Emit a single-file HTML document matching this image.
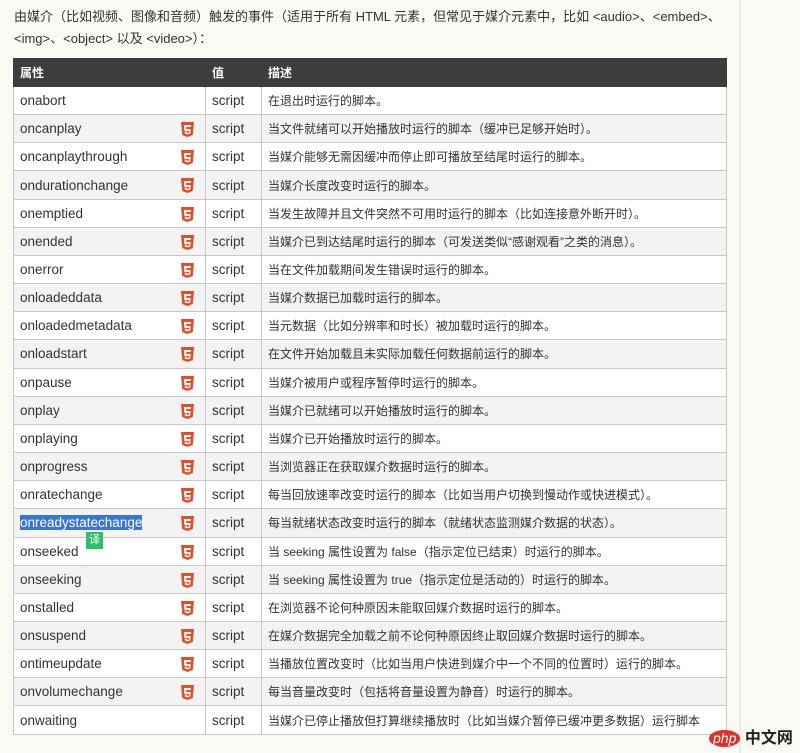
<!DOCTYPE html>
<html><head><meta charset="utf-8"><style>
body{margin:0;width:800px;height:753px;background:#fafaf5;font-family:"Liberation Sans","Noto Sans CJK SC",sans-serif;color:#333;font-size:13px;position:relative;overflow:hidden}
.vl{position:absolute;left:739px;top:0;width:2px;height:753px;background:#ebebe3}
.p{position:absolute;left:14px;top:6px;line-height:22px;font-size:13px;color:#333}
table{position:absolute;left:13px;top:58px;width:714px;border-collapse:collapse;table-layout:fixed}
th{background:#3d3d3d;color:#fff;text-align:left;font-weight:bold;height:27px;padding:0 6px;font-size:12px;border:1px solid #3d3d3d}
td{height:27.17px;padding:0 6px;border:1px solid #c8c8c8;white-space:nowrap;overflow:hidden;font-size:13.5px;position:relative;vertical-align:middle}
tr:nth-child(even) td{background:#fff}
tr:nth-child(odd) td{background:#f3f3f3}
td:nth-child(3){font-size:12px}
.h5{position:absolute;right:11px;top:7px}
.sel{background:#3875d7;color:#fff}
.yi{position:absolute;left:86px;top:532px;width:17px;height:17px;background:#2fbf6a;color:#fff;font-size:11px;text-align:center;line-height:17px}
.logo{position:absolute;left:709px;top:724px;font-size:16px}
</style></head><body>
<div class="vl"></div>
<div class="p">由媒介（比如视频、图像和音频）触发的事件（适用于所有 HTML 元素，但常见于媒介元素中，比如 &lt;audio&gt;、&lt;embed&gt;、<br>&lt;img&gt;、&lt;object&gt; 以及 &lt;video&gt;）：</div>
<table>
<colgroup><col style="width:192px"><col style="width:56px"><col></colgroup>
<tr><th>属性</th><th>值</th><th>描述</th></tr>
<tr><td>onabort</td><td>script</td><td>在退出时运行的脚本。</td></tr>
<tr><td>oncanplay<svg class="h5" width="13" height="15" viewBox="0 0 13 15"><path d="M0 0h13l-1.2 13L6.5 15 1.2 13z" fill="#e44d26"/><path d="M3 3h7l-.2 2H5.2l.1 2h4.3l-.4 4.5-2.7.9-2.7-.9-.1-1.8h2l.1.8 1.1.4 1.2-.4.1-1.5H3.4z" fill="#fff"/></svg></td><td>script</td><td>当文件就绪可以开始播放时运行的脚本（缓冲已足够开始时）。</td></tr>
<tr><td>oncanplaythrough<svg class="h5" width="13" height="15" viewBox="0 0 13 15"><path d="M0 0h13l-1.2 13L6.5 15 1.2 13z" fill="#e44d26"/><path d="M3 3h7l-.2 2H5.2l.1 2h4.3l-.4 4.5-2.7.9-2.7-.9-.1-1.8h2l.1.8 1.1.4 1.2-.4.1-1.5H3.4z" fill="#fff"/></svg></td><td>script</td><td>当媒介能够无需因缓冲而停止即可播放至结尾时运行的脚本。</td></tr>
<tr><td>ondurationchange<svg class="h5" width="13" height="15" viewBox="0 0 13 15"><path d="M0 0h13l-1.2 13L6.5 15 1.2 13z" fill="#e44d26"/><path d="M3 3h7l-.2 2H5.2l.1 2h4.3l-.4 4.5-2.7.9-2.7-.9-.1-1.8h2l.1.8 1.1.4 1.2-.4.1-1.5H3.4z" fill="#fff"/></svg></td><td>script</td><td>当媒介长度改变时运行的脚本。</td></tr>
<tr><td>onemptied<svg class="h5" width="13" height="15" viewBox="0 0 13 15"><path d="M0 0h13l-1.2 13L6.5 15 1.2 13z" fill="#e44d26"/><path d="M3 3h7l-.2 2H5.2l.1 2h4.3l-.4 4.5-2.7.9-2.7-.9-.1-1.8h2l.1.8 1.1.4 1.2-.4.1-1.5H3.4z" fill="#fff"/></svg></td><td>script</td><td>当发生故障并且文件突然不可用时运行的脚本（比如连接意外断开时）。</td></tr>
<tr><td>onended<svg class="h5" width="13" height="15" viewBox="0 0 13 15"><path d="M0 0h13l-1.2 13L6.5 15 1.2 13z" fill="#e44d26"/><path d="M3 3h7l-.2 2H5.2l.1 2h4.3l-.4 4.5-2.7.9-2.7-.9-.1-1.8h2l.1.8 1.1.4 1.2-.4.1-1.5H3.4z" fill="#fff"/></svg></td><td>script</td><td>当媒介已到达结尾时运行的脚本（可发送类似“感谢观看”之类的消息）。</td></tr>
<tr><td>onerror<svg class="h5" width="13" height="15" viewBox="0 0 13 15"><path d="M0 0h13l-1.2 13L6.5 15 1.2 13z" fill="#e44d26"/><path d="M3 3h7l-.2 2H5.2l.1 2h4.3l-.4 4.5-2.7.9-2.7-.9-.1-1.8h2l.1.8 1.1.4 1.2-.4.1-1.5H3.4z" fill="#fff"/></svg></td><td>script</td><td>当在文件加载期间发生错误时运行的脚本。</td></tr>
<tr><td>onloadeddata<svg class="h5" width="13" height="15" viewBox="0 0 13 15"><path d="M0 0h13l-1.2 13L6.5 15 1.2 13z" fill="#e44d26"/><path d="M3 3h7l-.2 2H5.2l.1 2h4.3l-.4 4.5-2.7.9-2.7-.9-.1-1.8h2l.1.8 1.1.4 1.2-.4.1-1.5H3.4z" fill="#fff"/></svg></td><td>script</td><td>当媒介数据已加载时运行的脚本。</td></tr>
<tr><td>onloadedmetadata<svg class="h5" width="13" height="15" viewBox="0 0 13 15"><path d="M0 0h13l-1.2 13L6.5 15 1.2 13z" fill="#e44d26"/><path d="M3 3h7l-.2 2H5.2l.1 2h4.3l-.4 4.5-2.7.9-2.7-.9-.1-1.8h2l.1.8 1.1.4 1.2-.4.1-1.5H3.4z" fill="#fff"/></svg></td><td>script</td><td>当元数据（比如分辨率和时长）被加载时运行的脚本。</td></tr>
<tr><td>onloadstart<svg class="h5" width="13" height="15" viewBox="0 0 13 15"><path d="M0 0h13l-1.2 13L6.5 15 1.2 13z" fill="#e44d26"/><path d="M3 3h7l-.2 2H5.2l.1 2h4.3l-.4 4.5-2.7.9-2.7-.9-.1-1.8h2l.1.8 1.1.4 1.2-.4.1-1.5H3.4z" fill="#fff"/></svg></td><td>script</td><td>在文件开始加载且未实际加载任何数据前运行的脚本。</td></tr>
<tr><td>onpause<svg class="h5" width="13" height="15" viewBox="0 0 13 15"><path d="M0 0h13l-1.2 13L6.5 15 1.2 13z" fill="#e44d26"/><path d="M3 3h7l-.2 2H5.2l.1 2h4.3l-.4 4.5-2.7.9-2.7-.9-.1-1.8h2l.1.8 1.1.4 1.2-.4.1-1.5H3.4z" fill="#fff"/></svg></td><td>script</td><td>当媒介被用户或程序暂停时运行的脚本。</td></tr>
<tr><td>onplay<svg class="h5" width="13" height="15" viewBox="0 0 13 15"><path d="M0 0h13l-1.2 13L6.5 15 1.2 13z" fill="#e44d26"/><path d="M3 3h7l-.2 2H5.2l.1 2h4.3l-.4 4.5-2.7.9-2.7-.9-.1-1.8h2l.1.8 1.1.4 1.2-.4.1-1.5H3.4z" fill="#fff"/></svg></td><td>script</td><td>当媒介已就绪可以开始播放时运行的脚本。</td></tr>
<tr><td>onplaying<svg class="h5" width="13" height="15" viewBox="0 0 13 15"><path d="M0 0h13l-1.2 13L6.5 15 1.2 13z" fill="#e44d26"/><path d="M3 3h7l-.2 2H5.2l.1 2h4.3l-.4 4.5-2.7.9-2.7-.9-.1-1.8h2l.1.8 1.1.4 1.2-.4.1-1.5H3.4z" fill="#fff"/></svg></td><td>script</td><td>当媒介已开始播放时运行的脚本。</td></tr>
<tr><td>onprogress<svg class="h5" width="13" height="15" viewBox="0 0 13 15"><path d="M0 0h13l-1.2 13L6.5 15 1.2 13z" fill="#e44d26"/><path d="M3 3h7l-.2 2H5.2l.1 2h4.3l-.4 4.5-2.7.9-2.7-.9-.1-1.8h2l.1.8 1.1.4 1.2-.4.1-1.5H3.4z" fill="#fff"/></svg></td><td>script</td><td>当浏览器正在获取媒介数据时运行的脚本。</td></tr>
<tr><td>onratechange<svg class="h5" width="13" height="15" viewBox="0 0 13 15"><path d="M0 0h13l-1.2 13L6.5 15 1.2 13z" fill="#e44d26"/><path d="M3 3h7l-.2 2H5.2l.1 2h4.3l-.4 4.5-2.7.9-2.7-.9-.1-1.8h2l.1.8 1.1.4 1.2-.4.1-1.5H3.4z" fill="#fff"/></svg></td><td>script</td><td>每当回放速率改变时运行的脚本（比如当用户切换到慢动作或快进模式）。</td></tr>
<tr><td><span class="sel">onreadystatechange</span><svg class="h5" width="13" height="15" viewBox="0 0 13 15"><path d="M0 0h13l-1.2 13L6.5 15 1.2 13z" fill="#e44d26"/><path d="M3 3h7l-.2 2H5.2l.1 2h4.3l-.4 4.5-2.7.9-2.7-.9-.1-1.8h2l.1.8 1.1.4 1.2-.4.1-1.5H3.4z" fill="#fff"/></svg></td><td>script</td><td>每当就绪状态改变时运行的脚本（就绪状态监测媒介数据的状态）。</td></tr>
<tr><td>onseeked<svg class="h5" width="13" height="15" viewBox="0 0 13 15"><path d="M0 0h13l-1.2 13L6.5 15 1.2 13z" fill="#e44d26"/><path d="M3 3h7l-.2 2H5.2l.1 2h4.3l-.4 4.5-2.7.9-2.7-.9-.1-1.8h2l.1.8 1.1.4 1.2-.4.1-1.5H3.4z" fill="#fff"/></svg></td><td>script</td><td>当 seeking 属性设置为 false（指示定位已结束）时运行的脚本。</td></tr>
<tr><td>onseeking<svg class="h5" width="13" height="15" viewBox="0 0 13 15"><path d="M0 0h13l-1.2 13L6.5 15 1.2 13z" fill="#e44d26"/><path d="M3 3h7l-.2 2H5.2l.1 2h4.3l-.4 4.5-2.7.9-2.7-.9-.1-1.8h2l.1.8 1.1.4 1.2-.4.1-1.5H3.4z" fill="#fff"/></svg></td><td>script</td><td>当 seeking 属性设置为 true（指示定位是活动的）时运行的脚本。</td></tr>
<tr><td>onstalled<svg class="h5" width="13" height="15" viewBox="0 0 13 15"><path d="M0 0h13l-1.2 13L6.5 15 1.2 13z" fill="#e44d26"/><path d="M3 3h7l-.2 2H5.2l.1 2h4.3l-.4 4.5-2.7.9-2.7-.9-.1-1.8h2l.1.8 1.1.4 1.2-.4.1-1.5H3.4z" fill="#fff"/></svg></td><td>script</td><td>在浏览器不论何种原因未能取回媒介数据时运行的脚本。</td></tr>
<tr><td>onsuspend<svg class="h5" width="13" height="15" viewBox="0 0 13 15"><path d="M0 0h13l-1.2 13L6.5 15 1.2 13z" fill="#e44d26"/><path d="M3 3h7l-.2 2H5.2l.1 2h4.3l-.4 4.5-2.7.9-2.7-.9-.1-1.8h2l.1.8 1.1.4 1.2-.4.1-1.5H3.4z" fill="#fff"/></svg></td><td>script</td><td>在媒介数据完全加载之前不论何种原因终止取回媒介数据时运行的脚本。</td></tr>
<tr><td>ontimeupdate<svg class="h5" width="13" height="15" viewBox="0 0 13 15"><path d="M0 0h13l-1.2 13L6.5 15 1.2 13z" fill="#e44d26"/><path d="M3 3h7l-.2 2H5.2l.1 2h4.3l-.4 4.5-2.7.9-2.7-.9-.1-1.8h2l.1.8 1.1.4 1.2-.4.1-1.5H3.4z" fill="#fff"/></svg></td><td>script</td><td>当播放位置改变时（比如当用户快进到媒介中一个不同的位置时）运行的脚本。</td></tr>
<tr><td>onvolumechange<svg class="h5" width="13" height="15" viewBox="0 0 13 15"><path d="M0 0h13l-1.2 13L6.5 15 1.2 13z" fill="#e44d26"/><path d="M3 3h7l-.2 2H5.2l.1 2h4.3l-.4 4.5-2.7.9-2.7-.9-.1-1.8h2l.1.8 1.1.4 1.2-.4.1-1.5H3.4z" fill="#fff"/></svg></td><td>script</td><td>每当音量改变时（包括将音量设置为静音）时运行的脚本。</td></tr>
<tr><td>onwaiting</td><td>script</td><td>当媒介已停止播放但打算继续播放时（比如当媒介暂停已缓冲更多数据）运行脚本</td></tr>
</table>
<div class="yi">译</div>
<div class="logo"><span style="display:inline-block;background:#e0302a;color:#fff;border-radius:50%;padding:0 4px;font-style:italic;font-size:14px;line-height:17px">php</span> <span style="color:#222;font-weight:bold">中文网</span></div>
</body></html>
